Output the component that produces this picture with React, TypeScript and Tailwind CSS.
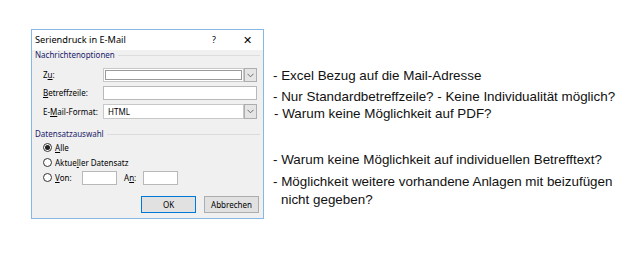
import React from "react";

const dlgFont = { fontFamily: '"Noto Sans", "Open Sans", sans-serif' };

function Chevron() {
  return (
    <svg width="7" height="5" viewBox="0 0 7 5">
      <path d="M0.5 0.8 L3.5 3.8 L6.5 0.8" fill="none" stroke="#606060" strokeWidth="0.9" />
    </svg>
  );
}

function Radio({ checked }: { checked?: boolean }) {
  return (
    <span className="w-[9px] h-[9px] rounded-full border border-[#333] bg-white flex items-center justify-center shrink-0">
      {checked && <span className="w-[5px] h-[5px] rounded-full bg-[#222]" />}
    </span>
  );
}

function GroupHeader({ children }: { children: React.ReactNode }) {
  return (
    <div className="flex items-center h-[10px]">
      <span className="text-[#1a1a6a]">{children}</span>
      <span className="flex-1 ml-[3px] h-px bg-[#dcdcdc]" />
    </div>
  );
}

export default function App() {
  return (
    <div className="w-[640px] h-[253px] bg-white flex items-start">
      <div
        className="ml-[31px] mt-[29px] w-[233px] h-[190px] border border-[#86b7e6] bg-[#f0f0f0] flex flex-col text-[8px] leading-[10px] text-[#000]"
        style={dlgFont}
      >
        <div className="h-[20px] bg-white flex items-center pl-[3px] shrink-0">
          <span className="text-[9.2px]">Seriendruck in E-Mail</span>
          <span className="ml-auto mr-[27px] text-[9px]">?</span>
          <span className="mr-[11px] text-[11px] font-light">✕</span>
        </div>
        <div className="flex flex-col px-[3px] pt-[0px]">
          <GroupHeader>Nachrichtenoptionen</GroupHeader>
          <div className="flex flex-col pl-[8px] pr-[3px] mt-[8px] gap-[4px]">
            <div className="flex items-center h-[14px]">
              <span className="w-[60px]">Z<span className="underline">u</span>:</span>
              <div className="flex-1 h-[14px] bg-white border border-[#c8c8c8] p-[1px] flex">
                <div className="flex-1 border border-[#9a9a9a]" />
              </div>
              <div className="w-[13px] h-[14px] bg-[#e5e5e5] border border-[#adadad] flex items-center justify-center">
                <Chevron />
              </div>
            </div>
            <div className="flex items-center h-[14px]">
              <span className="w-[60px]"><span className="underline">B</span>etreffzeile:</span>
              <div className="flex-1 h-[14px] bg-white border border-[#b8b8b8]" />
            </div>
            <div className="flex items-center h-[15px]">
              <span className="w-[60px]">E-<span className="underline">M</span>ail-Format:</span>
              <div className="flex-1 h-[15px] bg-white border border-[#c8c8c8] flex items-center pl-[4px]">HTML</div>
              <div className="w-[13px] h-[15px] bg-[#e5e5e5] border border-[#adadad] flex items-center justify-center">
                <Chevron />
              </div>
            </div>
          </div>
          <div className="mt-[10px]">
            <GroupHeader>Datensatzauswahl</GroupHeader>
          </div>
          <div className="flex flex-col pl-[8px] mt-[1px]">
            <div className="flex items-center gap-[3px] h-[15px]">
              <Radio checked />
              <span><span className="underline">A</span>lle</span>
            </div>
            <div className="flex items-center gap-[3px] h-[15px]">
              <Radio />
              <span>Aktue<span className="underline">l</span>ler Datensatz</span>
            </div>
            <div className="flex items-center h-[15px]">
              <Radio />
              <span className="ml-[3px] w-[27px]"><span className="underline">V</span>on:</span>
              <div className="w-[35px] h-[14px] bg-white border border-[#b8b8b8]" />
              <span className="ml-[7px] w-[19px]">A<span className="underline">n</span>:</span>
              <div className="w-[35px] h-[14px] bg-white border border-[#b8b8b8]" />
            </div>
          </div>
          <div className="flex justify-end gap-[8px] pr-[1px] mt-[11px]">
            <div className="w-[55px] h-[17px] bg-[#e1e1e1] border border-[#0078d7] flex items-center justify-center">OK</div>
            <div className="w-[55px] h-[17px] bg-[#e1e1e1] border border-[#adadad] flex items-center justify-center">Abbrechen</div>
          </div>
        </div>
      </div>
      <div
        className="ml-[9px] mt-[68px] flex flex-col text-[13.4px] leading-[15px] text-[#111]"
        style={{ fontFamily: '"Liberation Sans", Arial, sans-serif' }}
      >
        <div>- Excel Bezug auf die Mail-Adresse</div>
        <div className="mt-[6px]">- Nur Standardbetreffzeile? - Keine Individualität möglich?</div>
        <div className="mt-[2px] ml-[1px]">- Warum keine Möglichkeit auf PDF?</div>
        <div className="mt-[31px]">- Warum keine Möglichkeit auf individuellen Betrefftext?</div>
        <div className="mt-[7px]">- Möglichkeit weitere vorhandene Anlagen mit beizufügen</div>
        <div className="ml-[8px] mt-[3px]">nicht gegeben?</div>
      </div>
    </div>
  );
}
